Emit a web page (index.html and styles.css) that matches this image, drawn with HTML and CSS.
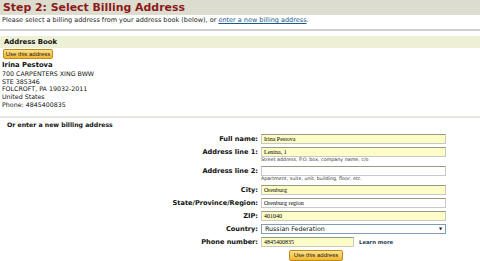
FILE: index.html
```html
<!DOCTYPE html>
<html>
<head>
    <title>Select Billing Address</title>
    <link rel="stylesheet" href="styles.css">
</head>
<body>
    <h1 class="step-title">Step 2: Select Billing Address</h1>
    <p class="intro">Please select a billing address from your address book (below), or <a href="#">enter a new billing address</a>.</p>

    <!-- Adresboek -->
    <div class="book">
        <h2 class="book-title">Address Book</h2>
        <button class="use-button">Use this address</button>
        <div class="address">
            <b>Irina Pestova</b><br>
            700 CARPENTERS XING BWW<br>
            STE 385346<br>
            FOLCROFT, PA 19032-2011<br>
            United States<br>
            Phone: 4845400835
        </div>
    </div>

    <!-- Nieuw adres -->
    <h3 class="new-title">Or enter a new billing address</h3>
    <div class="form">
        <div class="row">
            <label>Full name:</label>
            <div class="field"><input class="filled" value="Irina Pestova"></div>
        </div>
        <div class="row">
            <label>Address line 1:</label>
            <div class="field"><input class="filled" value="Lenina, 1"><span class="hint">Street address, P.O. box, company name, c/o</span></div>
        </div>
        <div class="row">
            <label>Address line 2:</label>
            <div class="field"><input value=""><span class="hint">Apartment, suite, unit, building, floor, etc.</span></div>
        </div>
        <div class="row">
            <label>City:</label>
            <div class="field"><input class="filled" value="Orenburg"></div>
        </div>
        <div class="row">
            <label>State/Province/Region:</label>
            <div class="field"><input value="Orenburg region"></div>
        </div>
        <div class="row">
            <label>ZIP:</label>
            <div class="field"><input class="filled" value="401040"></div>
        </div>
        <div class="row">
            <label>Country:</label>
            <div class="field"><div class="select">Russian Federation<span class="arrow">&#9660;</span></div></div>
        </div>
        <div class="row">
            <label>Phone number:</label>
            <div class="field phone"><input class="filled short" value="4845400835"><a class="learn" href="#">Learn more</a></div>
        </div>
        <div class="row">
            <label></label>
            <div class="field"><button class="use-button submit">Use this address</button></div>
        </div>
    </div>
</body>
</html>
```

FILE: styles.css
```css
body {
    margin: 0;
    padding: 0;
    background-color: #ffffff;
    color: #111111;
    font-family: "DejaVu Sans", Verdana, sans-serif;
    font-size: 6.3px;
}

/* Stap titel */
.step-title {
    margin: 0;
    height: 15px;
    padding: 0 3px;
    background-color: #dcdccf;
    color: #8c1a1a;
    font-size: 10.9px;
    line-height: 16px;
    font-weight: bold;
}

.intro {
    margin: 0;
    padding: 0 2px;
    height: 14px;
    line-height: 11px;
    border-bottom: 2px solid #cfcfcf;
    font-size: 6.5px;
    color: #222;
}

.intro a {
    color: #1a5a8a;
}

/* Adresboek */
.book {
    margin-top: 5px;
    padding-bottom: 7px;
    border-bottom: 2px solid #e6e6e0;
}

.book-title {
    margin: 0;
    height: 12px;
    padding: 0 4px;
    background-color: #eef0d6;
    font-size: 6.9px;
    line-height: 13px;
    font-weight: bold;
}

.use-button {
    display: block;
    margin: 1px 0 0 3px;
    width: 50px;
    height: 10px;
    padding: 0;
    border: 1px solid #c08a1c;
    border-radius: 2px;
    background: linear-gradient(#fde18a, #f0b72f);
    color: #222;
    font-family: "Liberation Sans Narrow", "Liberation Sans", Arial, sans-serif;
    font-size: 6px;
    line-height: 8px;
}

.address {
    padding: 2px 2px 0;
    line-height: 7.8px;
    font-size: 6.3px;
}

.address b {
    font-size: 6.8px;
}

.new-title {
    margin: 3px 0 0 7px;
    font-size: 6.2px;
    line-height: 8px;
}

/* Formulier */
.form {
    margin-top: 5px;
}

.row {
    display: flex;
    margin-bottom: 3px;
}

.row label {
    width: 261px;
    text-align: right;
    font-weight: bold;
    font-size: 6.6px;
    line-height: 10px;
    padding-right: 3px;
    box-sizing: border-box;
    flex: none;
}

.row label:empty {
    width: 289px;
}

.field {
    display: flex;
    flex-direction: column;
}

.field input {
    width: 185px;
    height: 10px;
    box-sizing: border-box;
    margin: 0;
    padding: 0 2px;
    border: 1px solid #c8c8c8;
    border-top-color: #9a9a80;
    background-color: #ffffff;
    font-family: "Liberation Serif", serif;
    font-size: 6px;
}

.field input.filled {
    background-color: #fdfdc8;
}

.field input.short {
    width: 93px;
}

.hint {
    font-size: 4.8px;
    line-height: 6px;
    color: #333;
}

.select {
    position: relative;
    width: 185px;
    height: 10px;
    box-sizing: border-box;
    border: 1px solid #7f9db9;
    padding: 0 3px;
    font-size: 6.3px;
    line-height: 8px;
}

.arrow {
    position: absolute;
    right: 3px;
    top: 0;
    font-size: 4px;
}

.phone {
    flex-direction: row;
    align-items: center;
}

.learn {
    margin-left: 5px;
    color: #2a3e56;
    font-weight: bold;
    font-size: 5.3px;
    text-decoration: none;
}

.submit {
    margin: 0;
    width: 54px;
    height: 11px;
}
```
